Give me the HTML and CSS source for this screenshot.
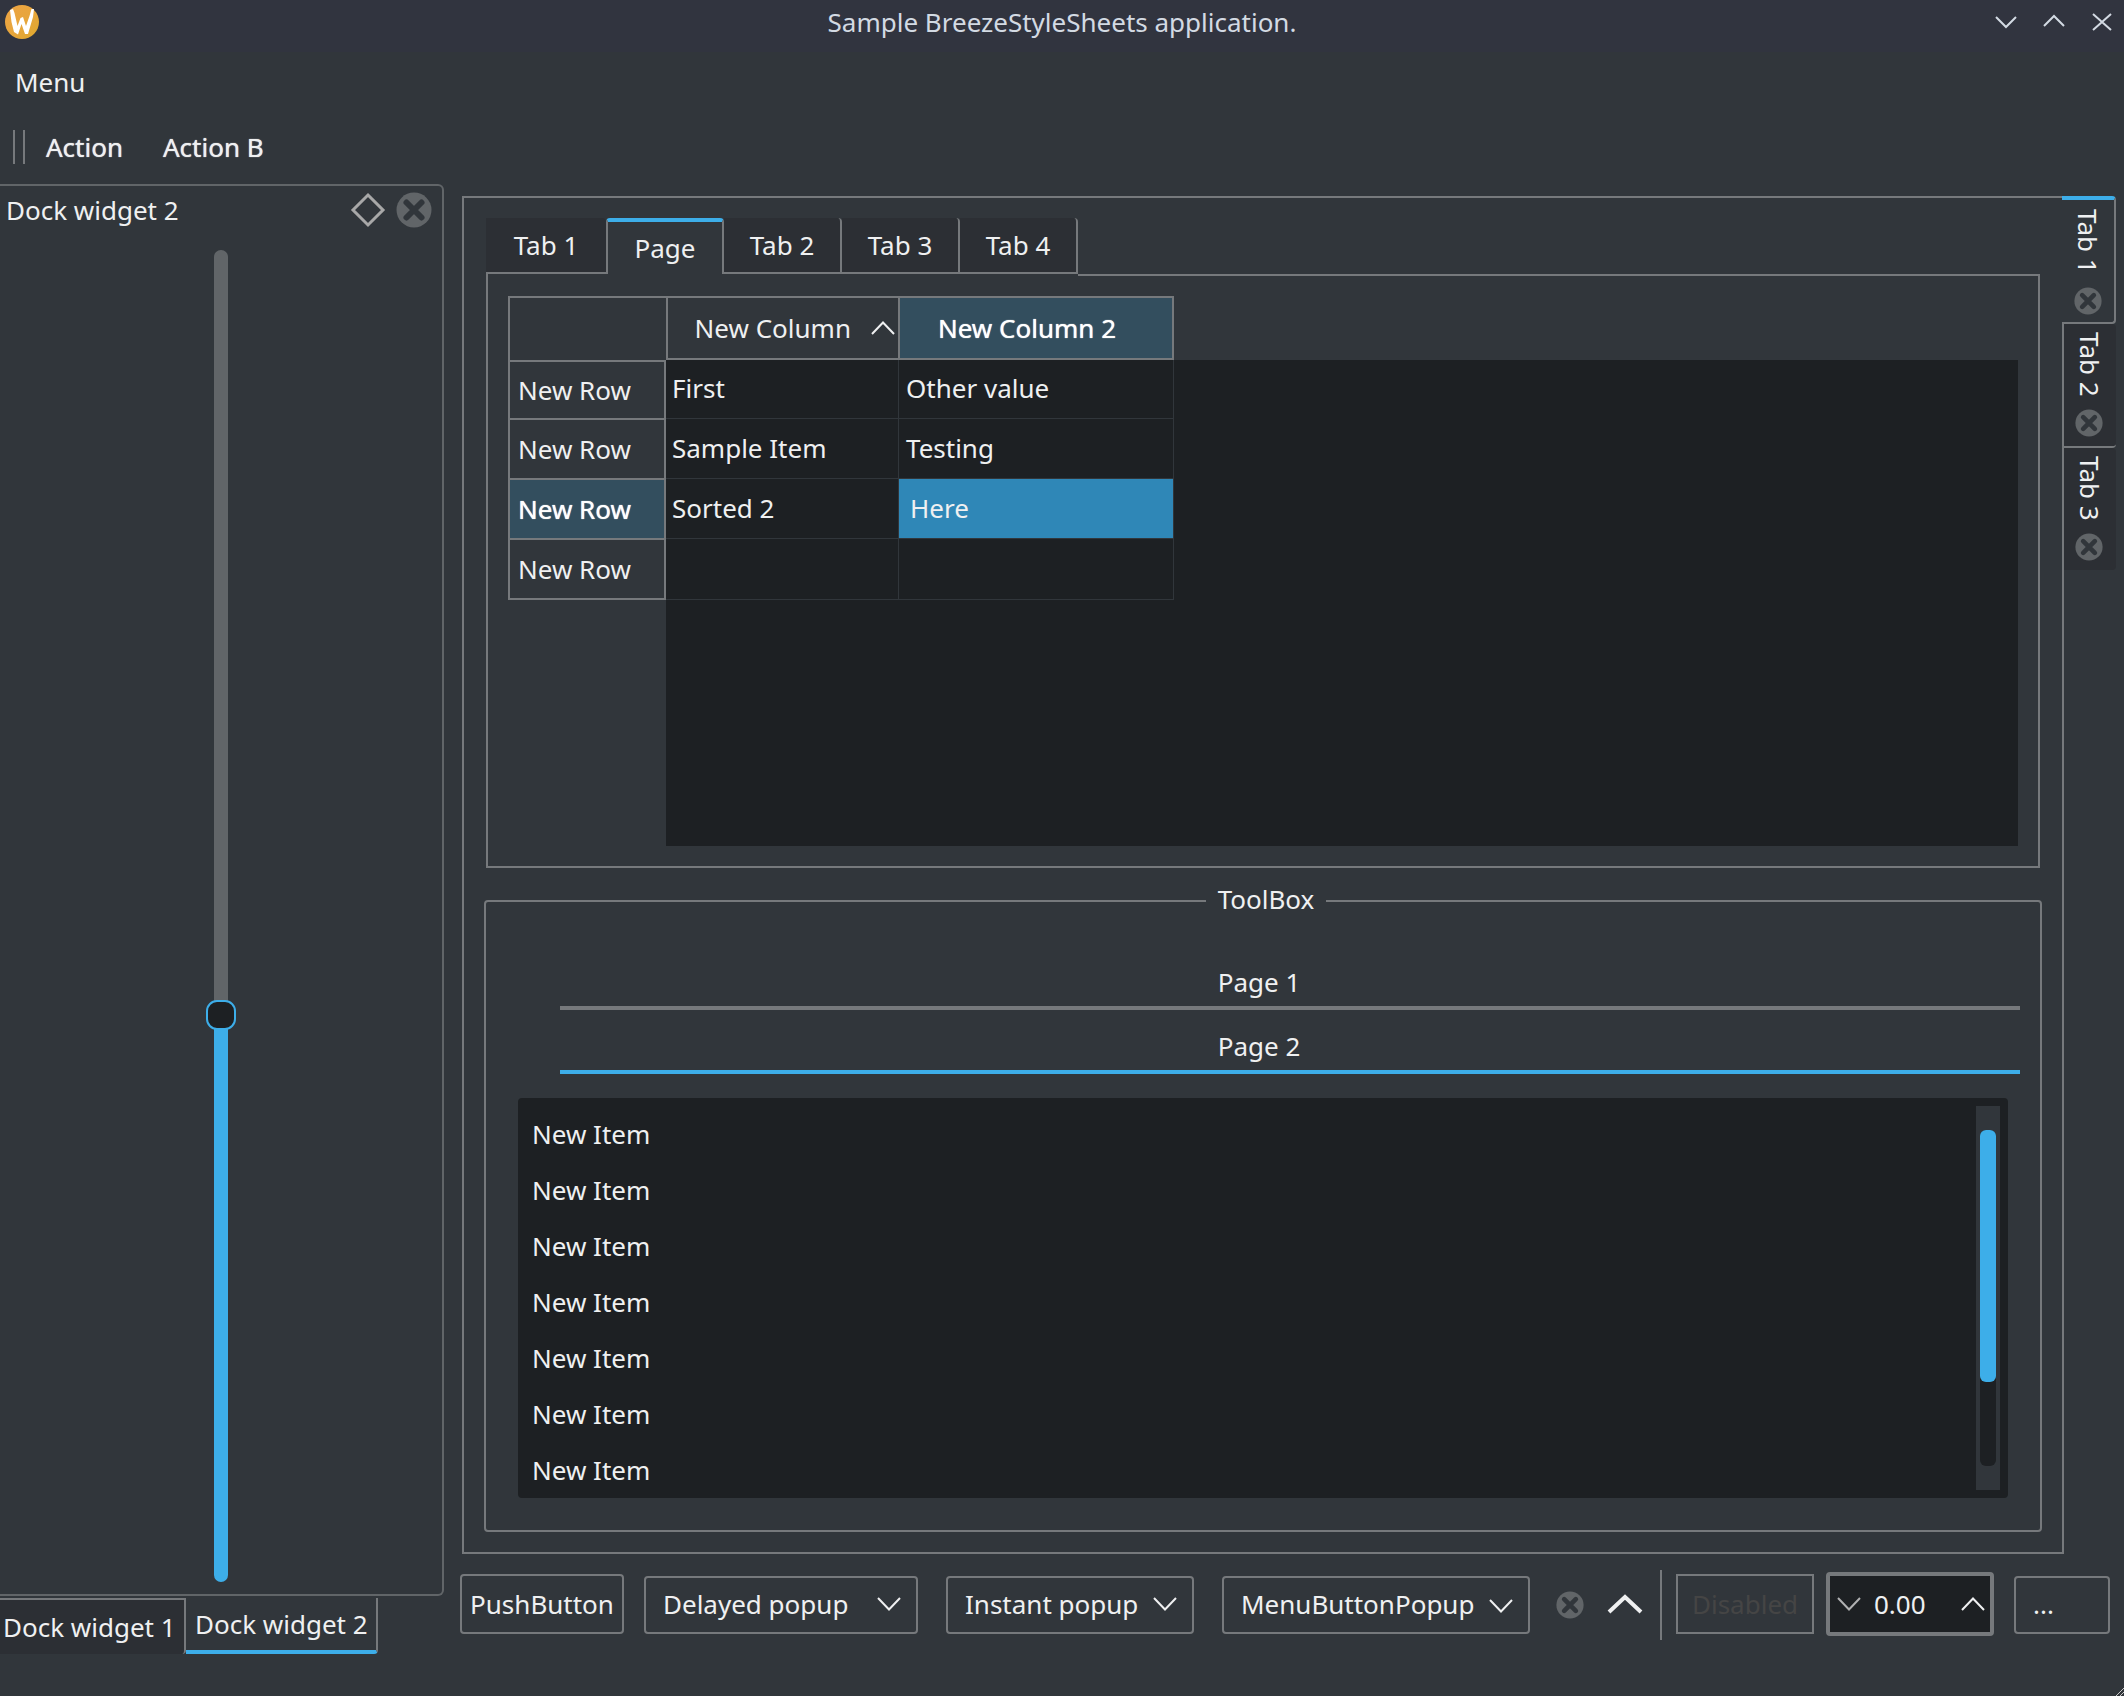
FILE: index.html
```html
<!DOCTYPE html>
<html lang="en">
<head>
<meta charset="utf-8">
<title>Sample BreezeStyleSheets application.</title>
<link rel="stylesheet" href="styles.css">
</head>
<body>
<svg class="defs" aria-hidden="true">
  <symbol id="down" viewBox="0 0 24 14"><path d="M1 1 12 12.500 23 1"/></symbol>
  <symbol id="up" viewBox="0 0 24 14"><path d="M1 13 12 1.500 23 13"/></symbol>
  <symbol id="close" viewBox="0 0 36 36"><circle cx="18" cy="18" r="17.500"/><path d="M10.500 10.500 25.500 25.500M25.500 10.500 10.500 25.500"/></symbol>
</svg>
<div class="window">
  <header class="titlebar">
    <svg class="logo" viewBox="0 0 34 34" aria-hidden="true">
      <defs><linearGradient id="gold" x1="0" y1="0" x2="1" y2="1"><stop offset="0" stop-color="#eda345"/><stop offset=".6" stop-color="#e6a63a"/><stop offset="1" stop-color="#dfa92c"/></linearGradient></defs>
      <circle cx="17" cy="17" r="17" fill="url(#gold)"/>
      <path fill="#fff" d="M5 5 8 4 9.500 8 12.500 21 15.500 13 18 12 21 21 24.500 11 26.500 4 29 4 28 12 23 29 20 29 16.500 19 13 29.500 9 27 6.500 17Z"/>
    </svg>
    <h1 class="title">Sample BreezeStyleSheets application.</h1>
    <div class="window-buttons">
      <button aria-label="Minimize"><svg viewBox="0 0 22 22"><path d="M1 6 11 16 21 6"/></svg></button>
      <button aria-label="Maximize"><svg viewBox="0 0 22 22"><path d="M1 15 11 5 21 15"/></svg></button>
      <button aria-label="Close"><svg viewBox="0 0 22 22"><path d="M2 3 20 19M20 3 2 19"/></svg></button>
    </div>
  </header>
  <nav class="menubar"><button>Menu</button></nav>
  <div class="toolbar">
    <span class="handle"></span>
    <button>Action</button>
    <button>Action B</button>
  </div>
  <main class="body">
    <aside class="dock">
      <section class="dock-panel">
        <div class="dock-title">
          <h2>Dock widget 2</h2>
          <button aria-label="Float"><svg class="diamond" viewBox="0 0 36 36"><path d="M18 3 33 18 18 33 3 18Z"/></svg></button>
          <button aria-label="Close dock"><svg class="close"><use href="#close"/></svg></button>
        </div>
        <div class="dock-content"><input class="slider" type="range" min="0" max="1000" value="424" aria-label="Value"></div>
      </section>
      <div class="dock-tabs">
        <button>Dock widget 1</button>
        <button class="active">Dock widget 2</button>
      </div>
    </aside>
    <div class="central">
      <div class="outer">
        <div class="outer-page">
          <div class="tabs">
            <button>Tab 1</button>
            <button class="active">Page</button>
            <button>Tab 2</button>
            <button>Tab 3</button>
            <button>Tab 4</button>
            <span class="tab-rest"></span>
          </div>
          <div class="tab-page">
            <div class="view">
              <table>
                <thead>
                  <tr><td class="corner"></td><th class="sorted" scope="col"><span>New Column<svg class="chevron"><use href="#up"/></svg></span></th><th class="current" scope="col">New Column 2</th></tr>
                </thead>
                <tbody>
                  <tr><th scope="row">New Row</th><td>First</td><td>Other value</td></tr>
                  <tr><th scope="row">New Row</th><td>Sample Item</td><td>Testing</td></tr>
                  <tr><th class="current" scope="row">New Row</th><td>Sorted 2</td><td class="selected">Here</td></tr>
                  <tr><th scope="row">New Row</th><td></td><td></td></tr>
                </tbody>
              </table>
            </div>
          </div>
          <fieldset class="group">
            <legend>ToolBox</legend>
            <button class="page">Page 1</button>
            <button class="page open">Page 2</button>
            <div class="list">
              <ul>
                <li>New Item</li>
                <li>New Item</li>
                <li>New Item</li>
                <li>New Item</li>
                <li>New Item</li>
                <li>New Item</li>
                <li>New Item</li>
              </ul>
              <div class="scrollbar"><div class="groove"><div class="thumb"></div></div></div>
            </div>
          </fieldset>
        </div>
        <div class="side-tabs">
          <div class="side-tab active"><button>Tab 1</button><button aria-label="Close Tab 1"><svg class="close"><use href="#close"/></svg></button></div>
          <div class="side-tab"><button>Tab 2</button><button aria-label="Close Tab 2"><svg class="close"><use href="#close"/></svg></button></div>
          <div class="side-tab"><button>Tab 3</button><button aria-label="Close Tab 3"><svg class="close"><use href="#close"/></svg></button></div>
        </div>
      </div>
      <div class="controls">
        <button class="push">PushButton</button>
        <button class="tool delayed">Delayed popup<svg class="chevron"><use href="#down"/></svg></button>
        <button class="tool instant">Instant popup<svg class="chevron"><use href="#down"/></svg></button>
        <button class="tool menu">MenuButtonPopup<svg class="chevron"><use href="#down"/></svg></button>
        <button class="clear" aria-label="Clear"><svg class="close"><use href="#close"/></svg></button>
        <button class="raise" aria-label="Up"><svg viewBox="0 0 36 20"><path d="M2 18 18 3 34 18"/></svg></button>
        <span class="separator"></span>
        <button class="push disabled" disabled>Disabled</button>
        <div class="spin">
          <button class="less" aria-label="Decrease"><svg class="chevron"><use href="#down"/></svg></button>
          <input type="text" value="0.00" aria-label="Amount">
          <button aria-label="Increase"><svg class="chevron"><use href="#up"/></svg></button>
        </div>
        <button class="tool more">...</button>
      </div>
    </div>
  </main>
  <svg class="grip" viewBox="0 0 8 8" aria-hidden="true"><path d="M0 8 8 0M4 8 8 4"/></svg>
</div>
</body>
</html>
```
FILE: styles.css
```css
:root {
  --bg: #31363b;
  --view: #1d2023;
  --tab: #2c2f34;
  --line: #76797c;
  --dim: #616568;
  --text: #eff0f1;
  --blue: #3daee9;
}
* { box-sizing: border-box; }
body {
  margin: 0;
  background: var(--bg);
  color: var(--text);
  font: 26px/36px "Noto Sans", sans-serif;
}
button, input {
  margin: 0;
  padding: 0;
  border: 0;
  background: none;
  color: inherit;
  font: inherit;
  white-space: nowrap;
}
svg { display: block; fill: none; stroke: currentColor; stroke-width: 2; }
h1, h2 { margin: 0; font: inherit; }
.defs { position: absolute; width: 0; height: 0; }
.chevron { width: 24px; height: 14px; flex: none; }
.close { width: 36px; height: 36px; stroke: none; fill: var(--dim); }
#close path { stroke: var(--bg); stroke-width: 6; stroke-linecap: round; }

.window { display: flex; flex-direction: column; min-height: 100vh; position: relative; }
.titlebar {
  display: grid;
  grid-template-columns: 1fr auto 1fr;
  align-items: start;
  height: 52px;
  padding: 4px 5px 0;
  background: #31343f;
  color: #d3dae3;
}
.logo { width: 34px; height: 34px; margin-top: 1px; stroke: none; }
.window-buttons { display: flex; justify-content: flex-end; gap: 26px; padding: 7px 6px 0 0; }
.window-buttons svg { width: 22px; height: 22px; }
.menubar { height: 62px; padding: 12px 15px; }
.menubar button { display: block; }
.toolbar { display: flex; align-items: center; height: 66px; }
.toolbar button { margin-right: 40px; text-shadow: 0 0 1px var(--text); }
.handle { width: 12px; height: 34px; margin: 0 21px 0 13px; border: solid var(--line); border-width: 0 2px; }

.body { display: flex; flex: 1; padding: 4px 8px 42px 0; }
.dock { display: flex; flex-direction: column; width: 444px; margin-right: 16px; }
.dock-panel {
  display: flex;
  flex-direction: column;
  flex: 1;
  border: 2px solid var(--dim);
  border-left: 0;
  border-radius: 0 6px 6px 0;
}
.dock-title { display: flex; align-items: center; gap: 10px; padding: 6px 10px 0 6px; }
.dock-title h2 { flex: 1; }
.diamond { width: 36px; height: 36px; color: #a8a8a8; stroke-width: 3; }
.dock-content { flex: 1; display: flex; justify-content: center; padding: 22px 0 12px; }
.slider {
  appearance: none;
  writing-mode: vertical-lr;
  direction: rtl;
  width: 30px;
}
.slider::-webkit-slider-runnable-track {
  width: 14px;
  border-radius: 7px;
  background: linear-gradient(var(--dim) 57%, var(--blue) 57%);
}
.slider::-webkit-slider-thumb {
  appearance: none;
  width: 30px;
  height: 30px;
  margin-left: -8px;
  border: 2px solid var(--blue);
  border-radius: 11px;
  background: var(--view);
}
.dock-tabs { display: flex; height: 58px; padding-top: 2px; }
.dock-tabs button {
  width: 186px;
  padding: 0 10px 0 3px;
  border: solid var(--line);
  border-width: 2px 2px 0 0;
  border-radius: 0 0 4px 0;
  background: var(--tab);
  text-align: left;
}
.dock-tabs .active {
  width: 192px;
  padding: 0 0 0 9px;
  border-width: 0 2px 4px 0;
  border-bottom-color: var(--blue);
  background: none;
}

.central { display: flex; flex-direction: column; flex: 1; min-width: 0; }
.outer { display: flex; flex: 1; padding: 12px 0 0 2px; }
.outer-page {
  display: flex;
  flex-direction: column;
  flex: 1;
  padding: 20px;
  border: 2px solid var(--line);
  border-right: 0;
}
.tabs { display: flex; margin: 0 2px; height: 58px; }
.tabs button {
  width: 118px;
  height: 56px;
  border: solid var(--line);
  border-width: 0 2px 2px 0;
  border-radius: 0 4px 0 0;
  background: var(--tab);
}
.tabs button:first-child { width: 120px; border-right: 0; }
.tabs .active {
  border-width: 4px 2px 0;
  border-top-color: var(--blue);
  border-radius: 4px 4px 0 0;
  background: none;
}
.tab-rest { flex: 1; border-bottom: 2px solid var(--line); }
.tab-page {
  flex: 1;
  margin: -2px 2px 0;
  padding: 22px 20px 20px;
  border: 2px solid var(--line);
  border-top: 0;
}
.view {
  height: 100%;
  background: linear-gradient(var(--view), var(--view)) 158px 64px no-repeat;
}
table { border-collapse: separate; border-spacing: 0; table-layout: fixed; width: 666px; }
th, td { height: 60px; padding: 0; font-weight: 400; text-align: left; }
thead th, .corner {
  height: 64px;
  border: solid var(--line);
  border-width: 2px 0 2px 2px;
}
.corner { width: 158px; border-bottom: 0; }
thead th { text-align: center; }
.sorted { width: 232px; }
.sorted span { display: flex; align-items: center; justify-content: flex-end; gap: 20px; padding-right: 3px; }
thead th:last-child { padding-right: 18px; border-right-width: 2px; }
tbody th { padding-left: 8px; border: solid var(--line); border-width: 2px 2px 0; }
tbody td { padding: 0 7px 2px 6px; border: 0 solid var(--bg); border-top-width: 1px; }
tbody td:last-child { padding-left: 7px; border-width: 1px 1px 0; }
tbody tr:first-child > * { height: 58px; }
tbody tr:first-child td { border-top-width: 0; }
tbody tr:last-child > * { height: 62px; }
tbody tr:last-child th { border-bottom-width: 2px; }
tbody tr:last-child td { border-bottom-width: 1px; }
.current { background: #334e5e; color: #fff; text-shadow: 0 0 1px #fff; }
tbody td.selected { padding-left: 11px; background: #2f87b7; background-clip: padding-box; }

.group {
  min-width: 0;
  margin: 13px 0 0;
  padding: 25px 26px 32px 32px;
  border: 2px solid var(--line);
  border-radius: 4px;
}
legend { margin: 0 auto; padding: 0 12px 4px; }
.page {
  display: block;
  width: calc(100% - 36px);
  height: 64px;
  margin-left: 42px;
  padding: 12px 62px 0 0;
  border-bottom: 4px solid var(--line);
}
.page.open { border-color: var(--blue); }
.list {
  display: flex;
  justify-content: space-between;
  height: 400px;
  margin: 24px 6px 0 0;
  padding: 8px 8px 8px 14px;
  border-radius: 4px;
  background: var(--view);
}
ul { margin: 0; padding: 0; list-style: none; }
li { height: 56px; line-height: 56px; }
.scrollbar { width: 24px; padding: 24px 4px; background: var(--bg); }
.groove { height: 100%; border-radius: 6px; background: var(--view); }
.thumb { height: 75%; border-radius: 6px; background: var(--blue); }

.side-tabs { display: flex; flex-direction: column; width: 54px; }
.side-tabs::after { content: ""; flex: 1; border-left: 2px solid var(--line); }
.side-tab {
  display: flex;
  flex-direction: column;
  align-items: center;
  justify-content: space-between;
  height: 124px;
  padding: 8px 0 9px;
  border: solid var(--line);
  border-width: 0 0 2px 2px;
  border-radius: 0 4px 4px 0;
  background: var(--tab);
}
.side-tab button:first-child { writing-mode: vertical-rl; }
.side-tab button:last-child { padding-right: 3px; }
.side-tab .close { width: 28px; height: 28px; }
.side-tab.active {
  height: 128px;
  padding: 9px 0 7px;
  border-width: 4px 2px 2px 0;
  border-top-color: var(--blue);
  background: none;
}
.side-tab.active button:last-child { padding: 0; }
.side-tab:last-child { height: 122px; border-bottom: 0; }

.controls { display: flex; align-items: center; padding-right: 6px; height: 100px; }
.push, .tool { height: 60px; border: 2px solid var(--line); border-radius: 4px; }
.push { width: 164px; }
.tool { display: flex; align-items: center; justify-content: space-between; height: 58px; margin-top: 2px; padding: 0 15px 2px 17px; }
.delayed { width: 274px; margin-left: 20px; }
.instant { width: 248px; margin-left: 28px; }
.menu { width: 308px; margin-left: 28px; }
.menu .chevron { margin-top: 4px; }
.clear { margin: 2px 0 0 26px; }
.clear .close { width: 28px; height: 28px; }
.raise { margin-left: 23px; }
.raise svg { width: 36px; height: 20px; stroke-width: 4; }
.separator { width: 2px; height: 70px; margin: 2px 14px 0 17px; background: var(--line); }
.disabled { width: 138px; border-radius: 0; color: #454545; }
.spin {
  display: flex;
  align-items: center;
  width: 168px;
  height: 64px;
  margin: 0 20px 0 12px;
  padding: 0 5px 0 7px;
  border: 4px solid var(--line);
  border-radius: 4px;
  background: var(--view);
}
.spin input { flex: 1; min-width: 0; padding-left: 13px; }
.less { color: #b0b1b2; }
.more { width: 96px; margin-left: auto; }
.grip { position: absolute; right: 0; bottom: 0; width: 8px; height: 8px; stroke-width: 1; color: #c8c8c8; }
```
